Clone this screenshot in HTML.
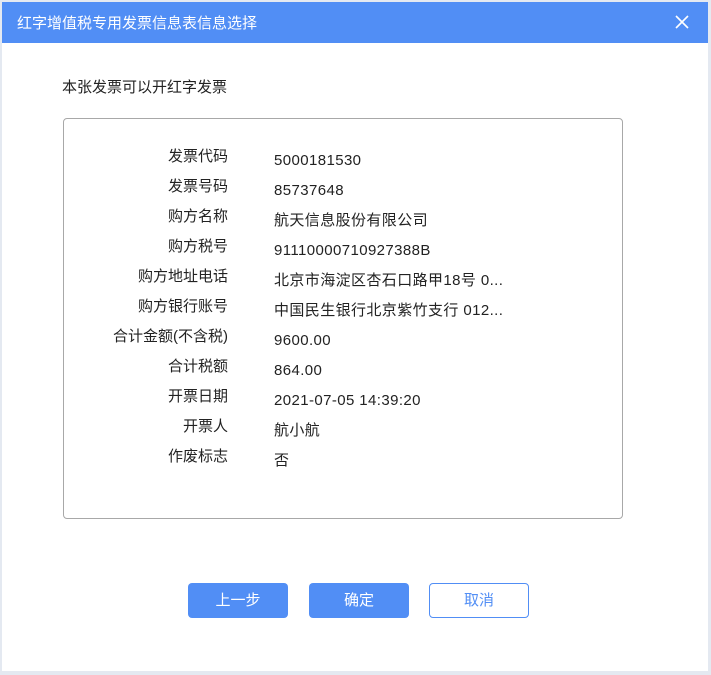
<!DOCTYPE html>
<html><head><meta charset="utf-8"><style>
html,body{margin:0;padding:0;width:711px;height:675px;overflow:hidden;background:#e4e9f1;font-family:"Liberation Sans","Noto Sans CJK SC",sans-serif;}
.dlg{position:absolute;left:2px;top:2px;width:706px;height:669px;background:#fff;}
.hd{position:absolute;left:0;top:0;width:706px;height:41px;background:#518ef5;color:#fff;font-size:15px;line-height:43px;}
.hd span{position:absolute;left:15px;}
.x{position:absolute;right:18px;top:12px;width:16px;height:16px;}
.tip{position:absolute;left:60px;top:74px;font-size:15px;color:#222;}
.box{position:absolute;left:61px;top:116px;width:558px;height:399px;border:1px solid #a8a8a8;border-radius:4px;}
.row{position:absolute;left:0;width:558px;height:20px;font-size:15px;line-height:20px;color:#222;}
.l{position:absolute;right:394px;top:-3px;height:20px;line-height:20px;white-space:nowrap;}
.v{position:absolute;left:210px;top:1px;height:20px;line-height:20px;white-space:nowrap;letter-spacing:0.4px;}
.btn{position:absolute;top:581px;width:100px;height:35px;border-radius:4px;font-size:15px;line-height:35px;text-align:center;box-sizing:border-box;}
.p{background:#518ef5;color:#fff;}
.o{border:1px solid #518ef5;color:#518ef5;background:#fff;line-height:33px;}
</style></head><body>
<div class="dlg">
<div class="hd"><span>红字增值税专用发票信息表信息选择</span>
<svg class="x" viewBox="0 0 16 16"><path d="M2 2L14 14M14 2L2 14" stroke="#fff" stroke-width="1.6"/></svg></div>
<div class="tip">本张发票可以开红字发票</div>
<div class="box">
<div class="row" style="top:31px"><span class="l">发票代码</span><span class="v">5000181530</span></div>
<div class="row" style="top:61px"><span class="l">发票号码</span><span class="v">85737648</span></div>
<div class="row" style="top:91px"><span class="l">购方名称</span><span class="v">航天信息股份有限公司</span></div>
<div class="row" style="top:121px"><span class="l">购方税号</span><span class="v">91110000710927388B</span></div>
<div class="row" style="top:151px"><span class="l">购方地址电话</span><span class="v">北京市海淀区杏石口路甲18号 0...</span></div>
<div class="row" style="top:181px"><span class="l">购方银行账号</span><span class="v">中国民生银行北京紫竹支行 012...</span></div>
<div class="row" style="top:211px"><span class="l">合计金额(不含税)</span><span class="v">9600.00</span></div>
<div class="row" style="top:241px"><span class="l">合计税额</span><span class="v">864.00</span></div>
<div class="row" style="top:271px"><span class="l">开票日期</span><span class="v">2021-07-05 14:39:20</span></div>
<div class="row" style="top:301px"><span class="l">开票人</span><span class="v">航小航</span></div>
<div class="row" style="top:331px"><span class="l">作废标志</span><span class="v">否</span></div>
</div>
<div class="btn p" style="left:186px">上一步</div>
<div class="btn p" style="left:307px">确定</div>
<div class="btn o" style="left:427px">取消</div>
</div>
</body></html>
